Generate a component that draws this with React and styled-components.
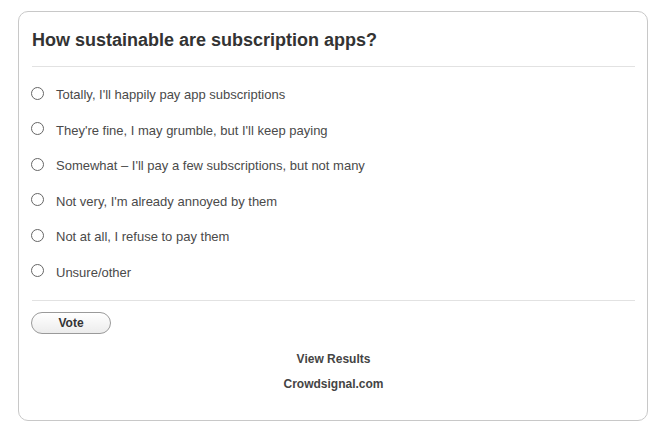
import React from "react";
import styled, { createGlobalStyle } from "styled-components";

const GlobalStyle = createGlobalStyle`
  body {
    margin: 0;
    background: #fff;
    font-family: "Liberation Sans", Arial, Helvetica, sans-serif;
  }
`;

const Page = styled.div`
  padding: 11px 0 0 18px;
`;

const Card = styled.div`
  box-sizing: border-box;
  width: 630px;
  height: 410px;
  border: 1px solid #c8c8c8;
  border-radius: 10px;
  padding: 17px 12px 0 13px;
`;

const Title = styled.h2`
  margin: 0;
  font-size: 18px;
  line-height: 22px;
  font-weight: bold;
  color: #333;
`;

const Divider = styled.hr`
  border: none;
  border-top: 1px solid #e2e2e2;
  margin: ${(p) => p.$margin};
`;

const OptionList = styled.div`
  display: flex;
  flex-direction: column;
`;

const Option = styled.label`
  display: flex;
  align-items: center;
  height: 35.5px;
  font-size: 13px;
  color: #4a4a4a;
  cursor: pointer;
`;

const Radio = styled.input.attrs({ type: "radio" })`
  appearance: none;
  box-sizing: border-box;
  width: 13px;
  height: 13px;
  margin: -3px 12px 0 -1px;
  border: 1px solid #666;
  border-radius: 50%;
  background: #fff;
  flex-shrink: 0;

  &:checked {
    box-shadow: inset 0 0 0 3px #fff;
    background: #444;
  }
`;

const VoteButton = styled.button`
  box-sizing: border-box;
  width: 80px;
  height: 22px;
  margin-left: -1px;
  border: 1px solid #9a9a9a;
  border-radius: 11px;
  background: linear-gradient(#ffffff, #ececec);
  font-family: "Liberation Sans", Arial, sans-serif;
  font-size: 12px;
  font-weight: bold;
  color: #333;
  padding: 0;
  cursor: pointer;
`;

const Footer = styled.div`
  display: flex;
  flex-direction: column;
  align-items: center;
  gap: 11px;
  margin-top: 18px;
`;

const FooterLink = styled.a`
  font-size: 12px;
  line-height: 14px;
  font-weight: bold;
  color: #444;
  text-decoration: none;
`;

const options = [
  "Totally, I'll happily pay app subscriptions",
  "They're fine, I may grumble, but I'll keep paying",
  "Somewhat – I'll pay a few subscriptions, but not many",
  "Not very, I'm already annoyed by them",
  "Not at all, I refuse to pay them",
  "Unsure/other",
];

export default function App() {
  return (
    <Page>
      <GlobalStyle />
      <Card>
        <Title>How sustainable are subscription apps?</Title>
        <Divider $margin="15px 0 10px" />
        <OptionList>
          {options.map((text) => (
            <Option key={text}>
              <Radio name="poll" />
              {text}
            </Option>
          ))}
        </OptionList>
        <Divider $margin="10px 0 11px" />
        <VoteButton>Vote</VoteButton>
        <Footer>
          <FooterLink href="#">View Results</FooterLink>
          <FooterLink href="#">Crowdsignal.com</FooterLink>
        </Footer>
      </Card>
    </Page>
  );
}
